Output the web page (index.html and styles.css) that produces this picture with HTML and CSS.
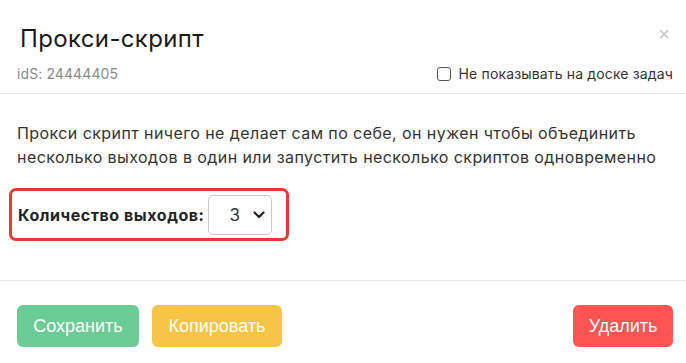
FILE: index.html
```html
<!DOCTYPE html>
<html lang="ru">
<head>
<meta charset="utf-8">
<link rel="stylesheet" href="styles.css">
</head>
<body>
<div class="modal">
  <div class="modal-header">
    <div class="title-row">
      <h1 class="title">Прокси-скрипт</h1>
      <span class="close">&times;</span>
    </div>
    <div class="meta-row">
      <span class="ids">idS: 24444405</span>
      <label class="hide-check"><span class="box"></span>Не показывать на доске задач</label>
    </div>
  </div>
  <div class="modal-body">
    <p class="desc">Прокси скрипт ничего не делает сам по себе, он нужен чтобы объединить несколько выходов в один или запустить несколько скриптов одновременно</p>
    <div class="outputs">
      <span class="outputs-label">Количество выходов:</span>
      <div class="select">
        <span class="select-value">3</span>
        <svg class="chev" width="12" height="8" viewBox="0 0 12 8"><path d="M1.5 1.5 L6 6 L10.5 1.5" fill="none" stroke="#222" stroke-width="2.2" stroke-linecap="round" stroke-linejoin="round"/></svg>
      </div>
    </div>
  </div>
  <div class="modal-footer">
    <div class="left-btns">
      <button class="btn btn-save">Сохранить</button>
      <button class="btn btn-copy">Копировать</button>
    </div>
    <button class="btn btn-delete">Удалить</button>
  </div>
</div>
</body>
</html>
```

FILE: styles.css
```css
html, body {
  margin: 0;
  padding: 0;
  background: #fff;
}
body {
  font-family: Inter, "Noto Sans", sans-serif;
  color: #222;
}
.modal {
  width: 686px;
  height: 363px;
  background: #fff;
}
.modal-header {
  padding: 24px 13px 0 17px;
  border-bottom: 1px solid #e6e6e6;
  height: 69px;
}
.title-row {
  display: flex;
  justify-content: space-between;
  align-items: flex-start;
}
.title {
  margin: 0 0 0 3px;
  font-size: 24px;
  font-weight: 400;
  line-height: 29px;
  color: #1a1a1a;
  letter-spacing: 0.35px;
}
.close {
  font-family: "Liberation Sans", sans-serif;
  font-size: 20px;
  line-height: 16px;
  color: #c4c4c4;
  margin-top: 2px;
  margin-right: 3px;
}
.meta-row {
  display: flex;
  justify-content: space-between;
  align-items: center;
  margin-top: 12px;
}
.ids {
  font-size: 14px;
  color: #8a8a8a;
  letter-spacing: 0.1px;
}
.hide-check {
  display: flex;
  align-items: center;
  font-size: 14px;
  color: #333;
  letter-spacing: 0.15px;
}
.box {
  width: 12px;
  height: 12px;
  border: 1px solid #555;
  border-radius: 3px;
  margin-right: 8px;
}
.modal-body {
  padding: 27px 17px 0 17px;
  height: 159px;
  border-bottom: 1px solid #e6e6e6;
}
.desc {
  margin: 0;
  font-size: 16px;
  line-height: 24px;
  color: #333;
  letter-spacing: 0.42px;
}
.outputs {
  display: inline-flex;
  align-items: center;
  margin: 19px 0 0 -8px;
  padding: 4px 14px 3px 6px;
  border: 3px solid #e53b2f;
  border-radius: 7px;
}
.outputs-label {
  font-size: 16px;
  font-weight: 700;
  color: #222;
  margin-right: 4px;
  letter-spacing: 0.55px;
}
.select {
  display: flex;
  align-items: center;
  justify-content: space-between;
  width: 64px;
  height: 40px;
  box-sizing: border-box;
  border: 1px solid #c8c8c8;
  border-radius: 5px;
  padding: 0 6px 0 20px;
}
.select-value {
  font-size: 17px;
  color: #333;
}
.modal-footer {
  display: flex;
  justify-content: space-between;
  padding: 24px 13px 0 17px;
}
.left-btns {
  display: flex;
  gap: 13px;
}
.btn {
  font-family: "Liberation Sans", Arial, sans-serif;
  font-size: 18px;
  color: #fff;
  border: none;
  border-radius: 6px;
  height: 42px;
  padding: 0;
}
.btn-save {
  background: #6bcb94;
  width: 122px;
}
.btn-copy {
  background: #f6c548;
  width: 130px;
}
.btn-delete {
  background: #ff5454;
  width: 100px;
}
```
